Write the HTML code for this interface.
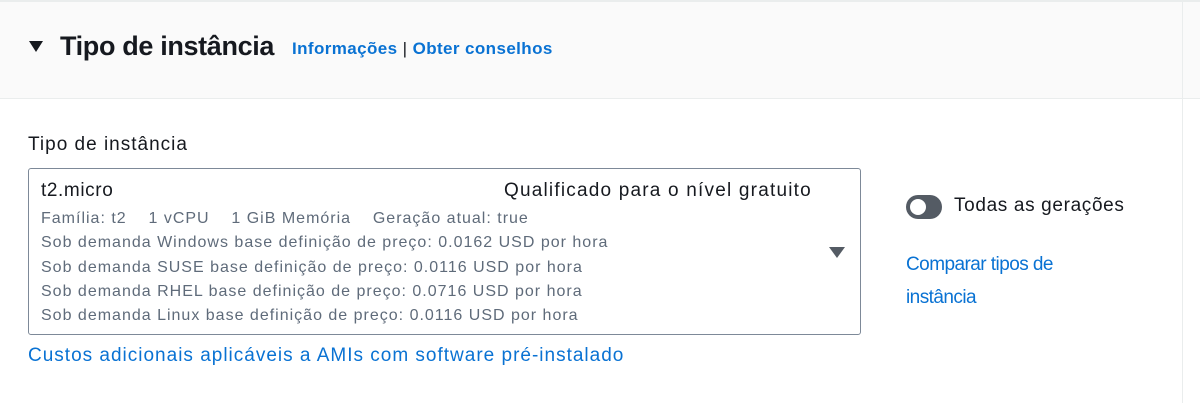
<!DOCTYPE html>
<html><head><meta charset="utf-8"><style>
*{margin:0;padding:0;box-sizing:border-box}
body{width:1200px;height:403px;background:#fff;font-family:"Liberation Sans",sans-serif;color:#16191f;position:relative;overflow:hidden}
.hdr{position:absolute;left:0;top:0;width:1200px;height:99px;background:#fafafa;border-top:2px solid #eaeded;border-bottom:1px solid #eaeded}
.a{position:absolute;white-space:nowrap}
.link{color:#0972d3}
.box{position:absolute;left:28px;top:168px;width:833px;height:167px;border:1px solid #7d8998;border-radius:3px}
.small{font-size:16px;color:#5f6b7a;letter-spacing:1px}
</style></head><body>
<div class="hdr"></div>
<div class="a" style="left:1182px;top:0;width:1px;height:403px;background:#eaeded"></div>
<svg class="a" style="left:29px;top:41px" width="14" height="12"><polygon points="0,0 14,0 7,11" fill="#16191f"/></svg>
<div class="a" style="left:60px;top:31px;font-size:27px;font-weight:bold;letter-spacing:-0.35px">Tipo de instância</div>
<div class="a link" style="left:292px;top:39px;font-size:17px;font-weight:bold;letter-spacing:0.4px">Informações <span style="color:#16191f;font-weight:normal">|</span> Obter conselhos</div>
<div class="a" style="left:28px;top:134px;font-size:19px;letter-spacing:1px">Tipo de instância</div>
<div class="box"></div>
<div class="a" style="left:41px;top:180px;font-size:19px;letter-spacing:0.6px">t2.micro</div>
<div class="a" style="left:504px;top:180px;font-size:19px;letter-spacing:1.2px">Qualificado para o nível gratuito</div>
<div class="a small" style="left:41px;top:210px">Família: t2&nbsp;&nbsp;&nbsp; 1 vCPU&nbsp;&nbsp;&nbsp; 1 GiB Memória&nbsp;&nbsp;&nbsp; Geração atual: true</div>
<div class="a small" style="left:41px;top:234px">Sob demanda Windows base definição de preço: 0.0162 USD por hora</div>
<div class="a small" style="left:41px;top:259px">Sob demanda SUSE base definição de preço: 0.0116 USD por hora</div>
<div class="a small" style="left:41px;top:283px">Sob demanda RHEL base definição de preço: 0.0716 USD por hora</div>
<div class="a small" style="left:41px;top:307px">Sob demanda Linux base definição de preço: 0.0116 USD por hora</div>
<svg class="a" style="left:829px;top:247px" width="16" height="12"><polygon points="0,0 16,0 8,11" fill="#545b64"/></svg>
<div class="a link" style="left:28px;top:345px;font-size:19px;letter-spacing:1px">Custos adicionais aplicáveis a AMIs com software pré-instalado</div>
<div class="a" style="left:906px;top:195px;width:36px;height:24px;border-radius:12px;background:#545b64"></div>
<div class="a" style="left:910px;top:199px;width:16px;height:16px;border-radius:8px;background:#fff"></div>
<div class="a" style="left:954px;top:195px;font-size:19px;letter-spacing:0.65px">Todas as gerações</div>
<div class="a link" style="left:906px;top:248px;font-size:19px;line-height:33px;letter-spacing:-0.55px">Comparar tipos de<br>instância</div>
</body></html>
